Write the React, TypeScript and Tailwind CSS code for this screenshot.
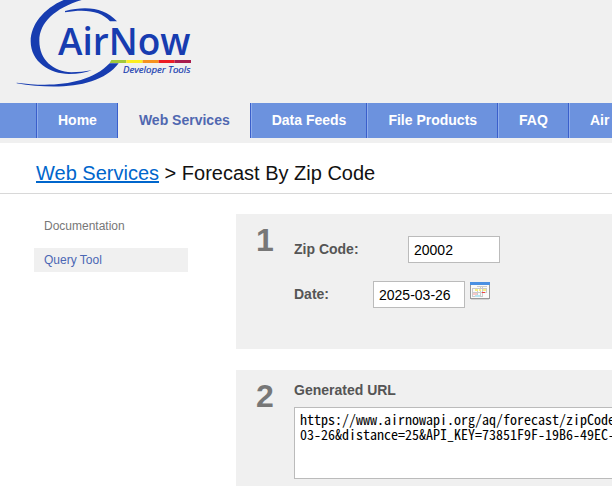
import type { ReactNode } from "react";

function Logo() {
  return (
    <svg viewBox="0 0 612 300" className="block h-[100px] w-[204px]" role="img" aria-label="AirNow Developer Tools">
      <path
        fill="#173cb0"
        d="M191 0C130 26 92 75 92 124C92 186 150 222 207 222C235 222 258 218 275 211C254 215 236 217 214 217C160 214 118 180 118 122C118 68 165 24 245 0Z"
      />
      <path fill="#173cb0" d="M195 33C260 16 315 24 351 64H330C304 33 256 26 195 37Z" />
      <path fill="#173cb0" d="M50 248C150 262 266 256 329 190H356C300 264 170 270 50 250Z" />
      <text x="174" y="165" fontSize="111" fontWeight="600" fill="#173cb0" fontFamily="'Open Sans', sans-serif">
        AirNow
      </text>
      <path fill="#a2c93a" d="M334 180H379V189H329Z" />
      <path fill="#fdee21" d="M379 180H428V189H379Z" />
      <path fill="#f6921e" d="M428 180H476V189H428Z" />
      <path fill="#ec1c24" d="M476 180H524V189H476Z" />
      <path fill="#a81c4e" d="M524 180H573V189H524Z" />
      <text x="369" y="219" fontSize="29" fontStyle="italic" fill="#173cb0" stroke="#173cb0" strokeWidth="0.6" fontFamily="'Open Sans', sans-serif">
        Developer Tools
      </text>
    </svg>
  );
}

const tabs = ["Home", "Web Services", "Data Feeds", "File Products", "FAQ", "Air"];

function Tab({ label, active }: { label: string; active: boolean }) {
  return (
    <li className="flex">
      <a
        href="#"
        className={
          active
            ? "flex items-center border-l border-[#3a5fcb] bg-[#f0f0f0] pr-5 pl-[21px] text-[#5068b0]"
            : "flex items-center border-l border-[#3a5fcb] pr-5 pl-[21px] text-white shadow-[inset_1px_0_0_#8fadec]"
        }
      >
        {label}
      </a>
    </li>
  );
}

function Step({ number, children }: { number: number; children: ReactNode }) {
  return (
    <section className="flex bg-[#f0f0f0] pl-5">
      <span className="mt-2 w-[38px] shrink-0 text-[32px] leading-9 font-bold text-[#777]">{number}</span>
      <div className="min-w-0 flex-1">{children}</div>
    </section>
  );
}

function CalendarIcon() {
  return (
    <svg viewBox="0 0 20 18" className="h-[18px] w-5" aria-hidden="true">
      <rect x="0" y="0" width="20" height="17" fill="#999" />
      <rect x="1" y="3" width="18" height="13" fill="#fafafa" />
      <rect x="0" y="0" width="20" height="3" fill="#4a90e2" />
      <rect x="1" y="17" width="18" height="1" fill="#d2d2d2" />
      <path d="M7 4.5H17M2 6.5H17M2 10.5H17M2 14.5H12M2.5 6V15M7.5 6V15M10.5 4V15M12.5 4V15M16.5 6V11" stroke="#cacaca" fill="none" />
      <path d="M5 7h3v2H5zM9 7h2v2H9zM13 7h3v2h-3z" fill="#f8f080" />
      <path d="M12 10h3v1h-3z" fill="#f04040" />
      <path d="M3 11h4v2H3z" fill="#f8c8c8" />
      <path d="M5 13h5v2H5z" fill="#b8e4f0" />
    </svg>
  );
}

const field = "h-[27px] w-[92px] border border-[#bbb] bg-white px-[5px] text-black";

export default function App() {
  return (
    <div className="overflow-hidden bg-white font-['Liberation_Sans',Arial,sans-serif] text-[14px]">
      <header className="bg-[#f0f0f0] pb-[5px]">
        <div className="h-[103px]">
          <Logo />
        </div>
        <nav className="bg-[#6c92de] pl-9">
          <ul className="flex h-[35px] font-bold whitespace-nowrap">
            {tabs.map((t) => (
              <Tab key={t} label={t} active={t === "Web Services"} />
            ))}
          </ul>
        </nav>
      </header>
      <h1 className="border-b border-[#d8d8d8] pt-4 pb-[6px] pl-9 text-[20px] leading-7 text-[#111]">
        <a href="#" className="text-[#0066cc] underline decoration-2">
          Web Services
        </a>
        {" > Forecast By Zip Code"}
      </h1>
      <div className="flex gap-12 pt-5 pl-[34px]">
        <aside className="w-[154px] shrink-0 text-[12px] leading-6">
          <ul className="flex flex-col gap-[10px]">
            <li>
              <a href="#" className="block px-[10px] text-[#777]">
                Documentation
              </a>
            </li>
            <li>
              <a href="#" className="block bg-[#f0f0f0] px-[10px] text-[#4b67b4]">
                Query Tool
              </a>
            </li>
          </ul>
        </aside>
        <main className="flex min-w-0 flex-1 flex-col gap-[21px]">
          <Step number={1}>
            <div className="flex flex-col gap-[18px] pt-[22px] pb-[41px]">
              <div className="flex items-center">
                <label htmlFor="zip" className="w-[114px] font-bold text-[#555]">
                  Zip Code:
                </label>
                <input id="zip" defaultValue="20002" className={field} />
              </div>
              <div className="flex items-center">
                <label htmlFor="date" className="w-[79px] font-bold text-[#555]">
                  Date:
                </label>
                <input id="date" defaultValue="2025-03-26" className={field} />
                <button type="button" aria-label="Pick a date" className="mb-2 ml-[5px]">
                  <CalendarIcon />
                </button>
              </div>
            </div>
          </Step>
          <Step number={2}>
            <label htmlFor="url" className="block pt-[10px] pb-[7px] leading-5 font-bold text-[#555]">
              Generated URL
            </label>
            <textarea
              id="url"
              defaultValue={"https://www.airnowapi.org/aq/forecast/zipCode\n03-26&distance=25&API_KEY=73851F9F-19B6-49EC-"}
              className="mb-2 block h-[72px] w-full resize-none overflow-hidden border border-r-0 border-[#bbb] bg-white py-1 pl-[5px] font-['Noto_Sans_Mono_CJK_SC','Liberation_Mono',monospace] text-[14px] leading-[15px] whitespace-pre text-black"
            />
          </Step>
        </main>
      </div>
    </div>
  );
}
